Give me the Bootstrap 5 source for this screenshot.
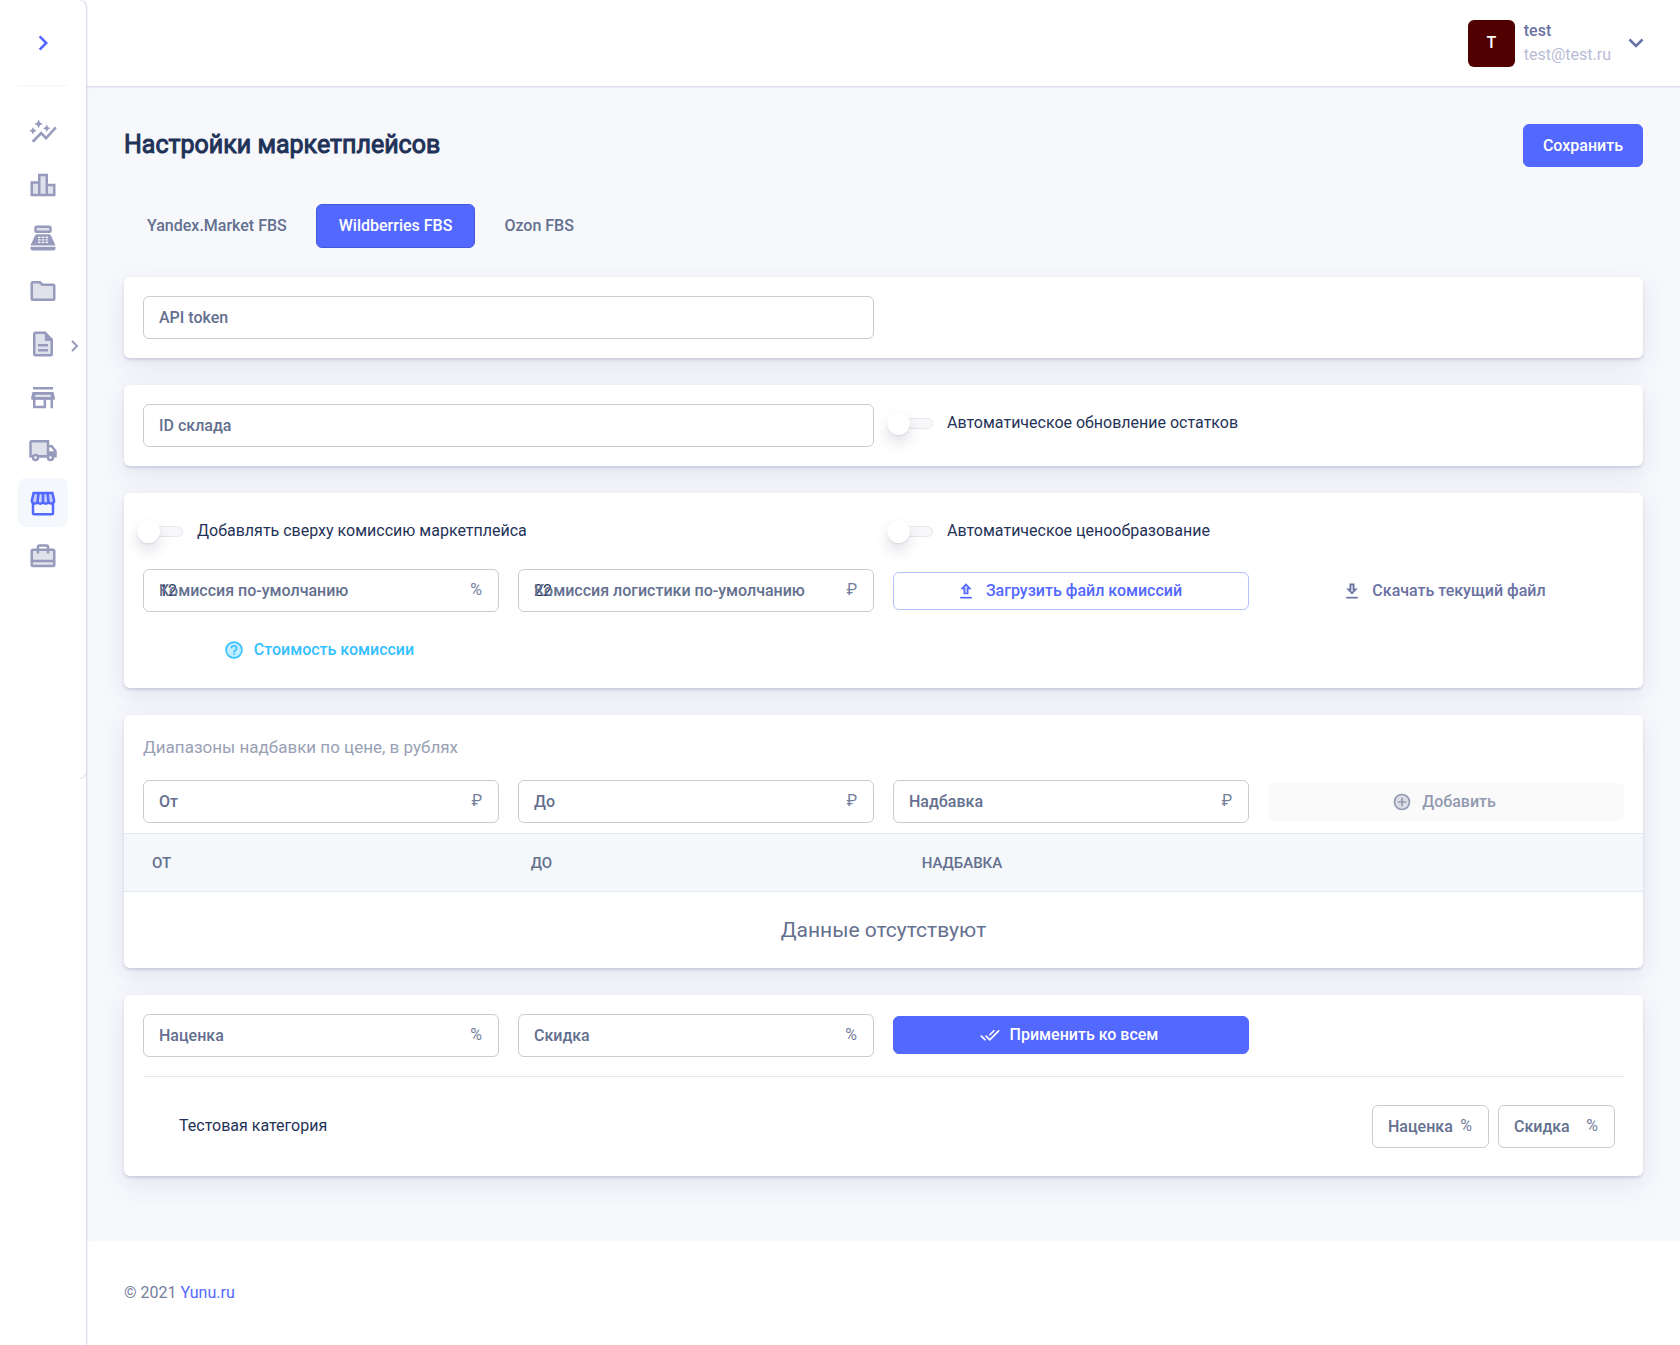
<!DOCTYPE html>
<html lang="ru">
<head>
<meta charset="utf-8">
<meta name="viewport" content="width=device-width, initial-scale=1">
<title>Настройки маркетплейсов</title>
<link href="https://cdn.jsdelivr.net/npm/bootstrap@5.3.0/dist/css/bootstrap.min.css" rel="stylesheet">
<style>
:root{--brand:#5368ff;--ink:#1f3258;--slate:#64708f;--line:#cbccd0;--side:#969bbd}
body{font-family:Roboto,"Liberation Sans",sans-serif;font-size:16px;line-height:24px;color:var(--ink);background:#fff}
.fw-mid{font-weight:500}
.sidebar{flex:0 0 86px;width:86px;background:#fff;border-top-right-radius:8px;box-shadow:1px 0 2px #cfd0e2;position:relative;z-index:3}
.sidebar::after{content:"";position:absolute;right:0;top:773px;width:6px;height:6px;border-right:1px solid #dcdceb;border-bottom:1px solid #e3e3ef;border-bottom-right-radius:6px}
.side-top{width:50px;height:86px;margin:0 18px;padding:0;border:0;border-bottom:1px solid #f4f4fa;color:var(--brand);background:transparent}
.side-nav{padding:21px 18px;gap:4px;color:var(--side)}
.side-item{height:49px;width:50px;border-radius:8px;color:inherit}
.side-item svg{width:30px;height:30px}
.side-item.active{background:#f4f8fc;color:var(--brand)}
.side-more{position:absolute;left:48px;top:17px}
.side-item .side-more svg{width:20px;height:20px}
.topbar{height:86px;padding:0 36px;background:#fff;box-shadow:0 1px 2px #d0d1e3;position:relative;z-index:2}
.user-btn{border:0;padding:0;background:transparent}
.avatar{width:47px;height:47px;border-radius:6px;background:#500000;color:#fff}
.user-text{padding:0 17px 0 9px}
.user-name{color:#6a72a3}.user-mail{color:#b9bcd6}
.content{background:#f7f8fc;padding:38px 37px 65px 38px}
.page-title{font-size:25px;line-height:42px;font-weight:400;-webkit-text-stroke:1px currentColor;margin:0}
.btn{--bs-btn-font-size:16px;--bs-btn-font-weight:500;--bs-btn-border-radius:6px;--bs-btn-line-height:24px;--bs-btn-padding-y:6px}
.btn-brand{--bs-btn-bg:var(--brand);--bs-btn-color:#fff;--bs-btn-border-color:var(--brand);--bs-btn-hover-bg:#4256e8;--bs-btn-hover-color:#fff}
.btn-save{--bs-btn-padding-x:19px;height:43px}
.btn-line{--bs-btn-color:var(--brand);--bs-btn-border-color:#b5beff;--bs-btn-hover-bg:#eef0ff}
.btn-quiet{--bs-btn-color:#6a72a3;--bs-btn-border-color:transparent}
.btn-info-text{--bs-btn-color:#35c0ff;--bs-btn-border-color:transparent}
.btn-off{--bs-btn-disabled-bg:#f9f9fa;--bs-btn-disabled-color:#64708f;--bs-btn-disabled-border-color:#f9f9fa;--bs-btn-disabled-opacity:.7}
.btn-row{height:38px;gap:10px;padding-left:10px;padding-right:14px}
.btn svg{width:20px;height:20px}
.tabs{margin:37px 0 29px;gap:6px}
.tabs .nav-link{height:44px;padding:9px 22px;border:1px solid transparent;border-radius:6px;color:var(--slate);font-weight:500;background:transparent}
.tabs .nav-link.active{background:var(--brand);border-color:#4757dc;color:#fff}
.panel{background:#fff;border:0;border-radius:6px;box-shadow:0 2px 3px rgba(94,94,160,.22),0 8px 26px rgba(70,70,120,.11);margin-bottom:27px;padding:19px}
.panel:last-child{margin-bottom:0}
.grid{--bs-gutter-x:19px;--bs-gutter-y:19px}
.field{position:relative}
.field input{height:43px;padding:8px 40px 8px 15px;border:1px solid var(--line);border-radius:6px;font-size:16px;color:var(--ink);background:#fff}
.field label{position:absolute;left:16px;top:10px;color:var(--slate);font-weight:500;pointer-events:none;white-space:nowrap}
.field .unit{position:absolute;right:17px;top:9px;color:#75809d}
.field-sm{width:117px}
.switch{height:38px;gap:14px}
.switch input{width:40px;height:11px;margin:0;appearance:none;border:1px solid #e7e8ec;border-radius:6px;background:#f8f8fa;position:relative}
.switch input::before{content:"";position:absolute;left:-7px;top:-7px;width:23px;height:23px;border-radius:50%;background:#fff;box-shadow:0 1px 2px rgba(60,60,100,.12),0 8px 14px rgba(60,60,100,.14)}
.panel-note{font-size:17px;line-height:26px;color:#99a1b5;margin-bottom:20px}
.rates{margin:10px -19px -19px}
.rates table{margin:0;table-layout:fixed}
.rates th{height:58px;padding:0 23px;background:#f4f8fb;border-top:1px solid #e6e8ee;border-bottom:1px solid #e6e8ee;color:var(--slate);font-weight:500;font-size:15px;vertical-align:middle}
.rates .c-first{width:25%;padding-left:28px}
.rates .c-mid{width:26%;padding-left:27px}
.rates td{height:76px;padding:0;border:0;text-align:center;vertical-align:middle;font-size:21px;color:var(--slate)}
.cat-list{margin-top:19px;border-top:1px solid #e9e9ec;padding:28px 9px 9px 36px}
.cat-fields{gap:9px}
.foot{padding:40px 38px 39px;color:#75809d;background:#fff}
.foot a{color:var(--brand);text-decoration:none}
</style>
<script src="https://cdn.jsdelivr.net/npm/bootstrap@5.3.0/dist/js/bootstrap.bundle.min.js"></script>
</head>
<body>
<div class="d-flex min-vh-100">
<aside class="sidebar">
  <button type="button" class="side-top d-flex align-items-center justify-content-center" aria-label="Развернуть меню">
    <svg width="30" height="30" viewBox="0 0 24 24" fill="none" stroke="currentColor" stroke-width="2"><path d="M9.3 6.7l5.3 5.3-5.3 5.3"/></svg>
  </button>
  <nav class="side-nav d-flex flex-column" aria-label="Меню">
    <a href="#" class="side-item d-flex align-items-center justify-content-center" aria-label="Аналитика"><svg viewBox="0 0 24 24" fill="currentColor"><path d="M14.06 9.94 12 9l2.06-.94L15 6l.94 2.06L18 9l-2.06.94L15 12l-.94-2.06zM4 14l.94-2.06L7 11l-2.06-.94L4 8l-.94 2.06L1 11l2.06.94L4 14zm4.500-5 1.090-2.410L12 5.500 9.590 4.410 8.500 2 7.410 4.410 5 5.500l2.410 1.090L8.500 9zm-4 11.500 6-6.010 4 4L23 8.930l-1.410-1.410-7.090 7.970-4-4L3 19l1.500 1.500z"/></svg></a>
    <a href="#" class="side-item d-flex align-items-center justify-content-center" aria-label="Рейтинг"><svg viewBox="0 0 24 24" fill="currentColor" fill-opacity=".3" stroke="currentColor" stroke-width="2"><path d="M3 10h6v10H3zM9 4h6v16H9zM15 12h6v8h-6z" /></svg></a>
    <a href="#" class="side-item d-flex align-items-center justify-content-center" aria-label="Касса"><svg viewBox="0 0 24 24" fill="currentColor"><rect x="6" y="3" width="12" height="4" rx="1" fill-opacity=".3" stroke="currentColor" stroke-width="2"/><path d="M20 22H4a2 2 0 0 1-2-2v-1h20v1a2 2 0 0 1-2 2zM18.500 10.200A2 2 0 0 0 16.700 9H7.300a2 2 0 0 0-1.800 1.200L2 18h20z"/><path d="M8 11.500h2M11 11.500h2M14 11.500h2M8 13.500h2M11 13.500h2M14 13.500h2M8 15.500h2M11 15.500h2M14 15.500h2" stroke="#fff" stroke-width="1"/></svg></a>
    <a href="#" class="side-item d-flex align-items-center justify-content-center" aria-label="Каталог"><svg viewBox="0 0 24 24" fill="currentColor" fill-opacity=".3" stroke="currentColor" stroke-width="2" stroke-linejoin="round"><path d="M4 5h5.500l2 2H20a1 1 0 0 1 1 1v10a1 1 0 0 1-1 1H4a1 1 0 0 1-1-1V6a1 1 0 0 1 1-1z"/></svg></a>
    <a href="#" class="side-item d-flex align-items-center justify-content-center position-relative" aria-label="Документы"><svg viewBox="0 0 24 24" fill="none" stroke="currentColor" stroke-width="2"><path d="M6 3h7.500L19 8.500V20a1 1 0 0 1-1 1H6a1 1 0 0 1-1-1V4a1 1 0 0 1 1-1z" fill="currentColor" fill-opacity=".3"/><path d="M14 3v6h5z" fill="currentColor" stroke-width="1"/><path d="M8 13h8M8 17h8"/></svg>
      <span class="side-more d-flex"><svg viewBox="0 0 20 20" fill="none" stroke="currentColor" stroke-width="2"><path d="M6 5l5 5-5 5"/></svg></span></a>
    <a href="#" class="side-item d-flex align-items-center justify-content-center" aria-label="Магазин"><svg viewBox="0 0 24 24" fill="none" stroke="currentColor" stroke-width="2"><path d="M5.200 9h13.600l.8 4H4.400z" fill="currentColor" fill-opacity=".3"/><path d="M4 5h16M3.500 14v-1.200L4.400 9h15.200l.9 3.800V14M3 13.200h18M5 13v7h8.500v-7M19 13v8"/></svg></a>
    <a href="#" class="side-item d-flex align-items-center justify-content-center" aria-label="Доставка"><svg viewBox="0 0 24 24" fill="none" stroke="currentColor" stroke-width="2"><path d="M4 17H2V6a1 1 0 0 1 1-1h13v12H8" fill="currentColor" fill-opacity=".3"/><path d="M8 17h8M16 9h3l3 4v4h-2"/><path d="M16 13h6v4h-6z" fill="currentColor" stroke="none"/><circle cx="6" cy="18" r="2" fill="#fff"/><circle cx="18" cy="18" r="2" fill="#fff"/></svg></a>
    <a href="#" class="side-item active d-flex align-items-center justify-content-center" aria-label="Маркетплейсы" aria-current="page"><svg viewBox="0 0 24 24" fill="none" stroke="currentColor" stroke-width="2"><path d="M4.500 4h15l1.400 6a2.400 2.400 0 0 1-4.500 1.200 2.500 2.500 0 0 1-4.400 0 2.500 2.500 0 0 1-4.400 0A2.400 2.400 0 0 1 3.100 10z" fill="currentColor" fill-opacity=".3"/><path d="M8.400 4l-.8 7M12 4v7M15.600 4l.8 7M4 12v8a1 1 0 0 0 1 1h14a1 1 0 0 0 1-1v-8"/></svg></a>
    <a href="#" class="side-item d-flex align-items-center justify-content-center" aria-label="Портфель"><svg viewBox="0 0 24 24" fill="none" stroke="currentColor" stroke-width="2"><rect x="3" y="7" width="18" height="13" rx="1" fill="currentColor" fill-opacity=".3"/><path d="M3 16h18M8 10V4.500a1 1 0 0 1 1-1h6a1 1 0 0 1 1 1V10"/></svg></a>
  </nav>
</aside>

<div class="flex-grow-1 d-flex flex-column">
  <header class="topbar d-flex align-items-center justify-content-end">
    <button type="button" class="user-btn d-flex align-items-center text-start">
      <span class="avatar d-flex align-items-center justify-content-center fw-mid">T</span>
      <span class="user-text d-flex flex-column"><span class="user-name fw-mid">test</span><span class="user-mail">test@test.ru</span></span>
      <svg width="16" height="16" viewBox="0 0 16 16" fill="none" stroke="#6a72a3" stroke-width="2.6"><path d="M1.500 4.500L8 11l6.500-6.500"/></svg>
    </button>
  </header>

  <main class="content">
    <div class="d-flex justify-content-between">
      <h1 class="page-title">Настройки маркетплейсов</h1>
      <button type="button" class="btn btn-brand btn-save">Сохранить</button>
    </div>
    <ul class="nav tabs">
      <li><button type="button" class="nav-link">Yandex.Market FBS</button></li>
      <li><button type="button" class="nav-link active">Wildberries FBS</button></li>
      <li><button type="button" class="nav-link">Ozon FBS</button></li>
    </ul>

    <section class="card panel">
      <div class="row grid">
        <div class="col-6"><div class="field"><input class="form-control" id="token" type="text"><label for="token">API token</label></div></div>
      </div>
    </section>

    <section class="card panel">
      <div class="row grid">
        <div class="col-6"><div class="field"><input class="form-control" id="stock" type="text"><label for="stock">ID склада</label></div></div>
        <div class="col-6"><div class="switch d-flex align-items-center"><input type="checkbox" role="switch" id="sw1"><label for="sw1">Автоматическое обновление остатков</label></div></div>
      </div>
    </section>

    <section class="card panel">
      <div class="row grid align-items-center">
        <div class="col-6"><div class="switch d-flex align-items-center"><input type="checkbox" role="switch" id="sw2"><label for="sw2">Добавлять сверху комиссию маркетплейса</label></div></div>
        <div class="col-6"><div class="switch d-flex align-items-center"><input type="checkbox" role="switch" id="sw3"><label for="sw3">Автоматическое ценообразование</label></div></div>
        <div class="col-3"><div class="field"><input class="form-control" id="fee" type="text" value="12"><label for="fee">Комиссия по-умолчанию</label><span class="unit">%</span></div></div>
        <div class="col-3"><div class="field"><input class="form-control" id="logi" type="text" value="22"><label for="logi">Комиссия логистики по-умолчанию</label><span class="unit">₽</span></div></div>
        <div class="col-3"><button type="button" class="btn btn-line btn-row w-100 d-flex align-items-center justify-content-center"><svg viewBox="0 0 24 24" fill="none" stroke="currentColor" stroke-width="2"><path d="M5 20h14"/><path d="M10 15V9H7.500L12 4.200 16.500 9H14v6z" fill="currentColor" fill-opacity=".3"/></svg>Загрузить файл комиссий</button></div>
        <div class="col-3"><button type="button" class="btn btn-quiet btn-row w-100 d-flex align-items-center justify-content-center"><svg viewBox="0 0 24 24" fill="none" stroke="currentColor" stroke-width="2"><path d="M5 20h14"/><path d="M10 4v6H7.500l4.500 4.800L16.500 10H14V4z" fill="currentColor" fill-opacity=".3"/></svg>Скачать текущий файл</button></div>
        <div class="col-3"><button type="button" class="btn btn-info-text btn-row w-100 d-flex align-items-center justify-content-center"><svg viewBox="0 0 24 24" fill="none" stroke="currentColor" stroke-width="2"><circle cx="12" cy="12" r="9.500" fill="currentColor" fill-opacity=".3"/><path d="M9 10a3 3 0 1 1 4.500 2.500c-1 .6-1.500 1.100-1.500 2.500M12 16v2"/></svg>Стоимость комиссии</button></div>
      </div>
    </section>

    <section class="card panel">
      <div class="panel-note">Диапазоны надбавки по цене, в рублях</div>
      <div class="row grid align-items-center">
        <div class="col-3"><div class="field"><input class="form-control" id="from" type="text"><label for="from">От</label><span class="unit">₽</span></div></div>
        <div class="col-3"><div class="field"><input class="form-control" id="to" type="text"><label for="to">До</label><span class="unit">₽</span></div></div>
        <div class="col-3"><div class="field"><input class="form-control" id="extra" type="text"><label for="extra">Надбавка</label><span class="unit">₽</span></div></div>
        <div class="col-3"><button type="button" disabled class="btn btn-off btn-row w-100 d-flex align-items-center justify-content-center"><svg viewBox="0 0 24 24" fill="none" stroke="currentColor" stroke-width="2"><circle cx="12" cy="12" r="9" fill="currentColor" fill-opacity=".3"/><path d="M7 12h10M12 7v10"/></svg>Добавить</button></div>
      </div>
      <div class="rates">
        <table class="table">
          <thead><tr><th class="c-first">ОТ</th><th class="c-mid">ДО</th><th>НАДБАВКА</th></tr></thead>
          <tbody><tr><td colspan="3">Данные отсутствуют</td></tr></tbody>
        </table>
      </div>
    </section>

    <section class="card panel">
      <div class="row grid align-items-center">
        <div class="col-3"><div class="field"><input class="form-control" id="markup" type="text"><label for="markup">Наценка</label><span class="unit">%</span></div></div>
        <div class="col-3"><div class="field"><input class="form-control" id="sale" type="text"><label for="sale">Скидка</label><span class="unit">%</span></div></div>
        <div class="col-3"><button type="button" class="btn btn-brand btn-row w-100 d-flex align-items-center justify-content-center"><svg viewBox="0 0 24 24" fill="none" stroke="currentColor" stroke-width="2"><path d="M1 12.700l5.600 5.600M6.700 12.700l5 5L23 6.500M17.300 6.300l-6 6"/></svg>Применить ко всем</button></div>
      </div>
      <div class="cat-list d-flex align-items-center justify-content-between">
        <span>Тестовая категория</span>
        <div class="cat-fields d-flex">
          <div class="field field-sm"><input class="form-control" id="cm" type="text"><label for="cm">Наценка</label><span class="unit">%</span></div>
          <div class="field field-sm"><input class="form-control" id="cs" type="text"><label for="cs">Скидка</label><span class="unit">%</span></div>
        </div>
      </div>
    </section>
  </main>

  <footer class="foot">© 2021 <a href="#">Yunu.ru</a></footer>
</div>
</div>
</body>
</html>
